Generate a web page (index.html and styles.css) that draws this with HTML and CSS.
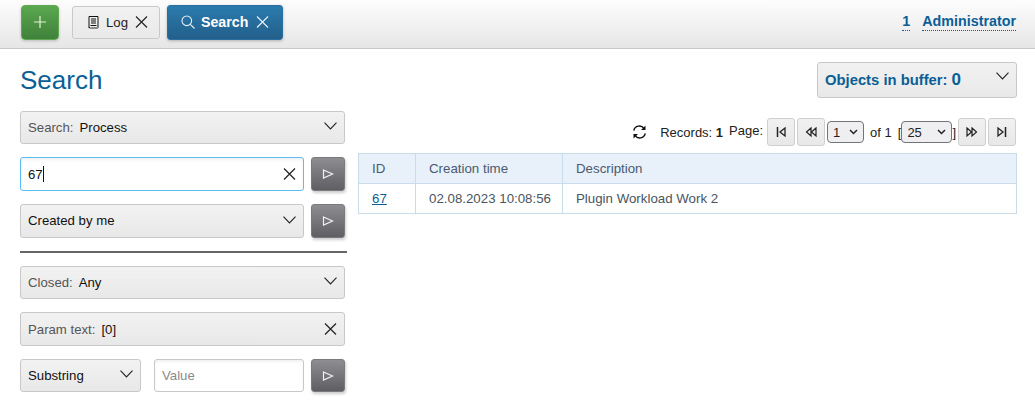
FILE: index.html
```html
<!DOCTYPE html>
<html lang="en">
<head>
<meta charset="utf-8">
<title>Search</title>
<link rel="stylesheet" href="styles.css">
</head>
<body>
<header class="topbar">
  <button class="add-btn" aria-label="Add">
    <svg width="12" height="12" viewBox="0 0 12 12"><path d="M6 0v12M0 6h12" stroke="#e6f0d2" stroke-width="1.2" fill="none"/></svg>
  </button>
  <div class="tab tab-log">
    <svg width="11" height="13" viewBox="0 0 11 13"><path d="M1 .5h9v11l-1 1-1-1-1 1-1-1-1 1-1-1-1 1-1-1-1 .5z" fill="none" stroke="#111" stroke-width="1"/><path d="M3 3h5M3 5h5M3 7h5M2.500 9.500h6" stroke="#111" stroke-width="1" fill="none"/></svg>
    <span class="tab-label">Log</span>
    <svg class="x" width="13" height="12" viewBox="0 0 13 12"><path d="M1 .5l11 11M12 .5l-11 11" stroke="#222" stroke-width="1.100" fill="none"/></svg>
  </div>
  <div class="tab tab-search">
    <svg width="14" height="14" viewBox="0 0 14 14"><circle cx="5.800" cy="5.800" r="4.800" fill="none" stroke="#e8f0f6" stroke-width="1.100"/><path d="M9.300 9.300l4.200 4.200" stroke="#e8f0f6" stroke-width="1.100" fill="none"/></svg>
    <span class="tab-label">Search</span>
    <svg class="x" width="13" height="12" viewBox="0 0 13 12"><path d="M1 .5l11 11M12 .5l-11 11" stroke="#e8f0f6" stroke-width="1.100" fill="none"/></svg>
  </div>
  <nav class="user">
    <a class="user-link">1</a>
    <a class="user-link">Administrator</a>
  </nav>
</header>

<div class="title-row">
  <h1 class="title">Search</h1>
  <div class="buffer">
    <span class="buffer-text">Objects in buffer: <span class="buffer-num">0</span></span>
    <svg class="chev" width="13" height="8" viewBox="0 0 13 8"><path d="M.5.700L6.500 7l6-6.300" stroke="#222" stroke-width="1.100" fill="none"/></svg>
  </div>
</div>

<main class="content">
  <aside class="filters">
    <div class="field field-wide">
      <span class="lbl">Search:</span><span class="val">Process</span>
      <svg class="chev end" width="13" height="8" viewBox="0 0 13 8"><path d="M.5.700L6.500 7l6-6.300" stroke="#222" stroke-width="1.100" fill="none"/></svg>
    </div>
    <div class="line line-input">
      <div class="field input focus">
        <span class="val-plain">67</span><span class="caret"></span>
        <svg class="end" width="13" height="12" viewBox="0 0 13 12"><path d="M1 .5l11 11M12 .5l-11 11" stroke="#222" stroke-width="1.200" fill="none"/></svg>
      </div>
      <button class="go" aria-label="Go"><svg width="12" height="12" viewBox="0 0 12 12"><path d="M1.500 2l9 4-9 4z" fill="none" stroke="#f2f2f2" stroke-width="1.200"/></svg></button>
    </div>
    <div class="line line-created">
      <div class="field">
        <span class="val-plain">Created by me</span>
        <svg class="chev end" width="13" height="8" viewBox="0 0 13 8"><path d="M.5.700L6.500 7l6-6.300" stroke="#222" stroke-width="1.100" fill="none"/></svg>
      </div>
      <button class="go" aria-label="Go"><svg width="12" height="12" viewBox="0 0 12 12"><path d="M1.500 2l9 4-9 4z" fill="none" stroke="#f2f2f2" stroke-width="1.200"/></svg></button>
    </div>
    <hr class="divider">
    <div class="field field-wide">
      <span class="lbl">Closed:</span><span class="val">Any</span>
      <svg class="chev end" width="13" height="8" viewBox="0 0 13 8"><path d="M.5.700L6.500 7l6-6.300" stroke="#222" stroke-width="1.100" fill="none"/></svg>
    </div>
    <div class="field field-wide field-param">
      <span class="lbl">Param text:</span><span class="val">[0]</span>
      <svg class="end" width="13" height="12" viewBox="0 0 13 12"><path d="M1 .5l11 11M12 .5l-11 11" stroke="#222" stroke-width="1.200" fill="none"/></svg>
    </div>
    <div class="line line-value">
      <div class="field field-sub">
        <span class="val-plain">Substring</span>
        <svg class="chev end" width="13" height="8" viewBox="0 0 13 8"><path d="M.5.700L6.500 7l6-6.300" stroke="#222" stroke-width="1.100" fill="none"/></svg>
      </div>
      <div class="field input input-value"><span class="placeholder">Value</span></div>
      <button class="go" aria-label="Go"><svg width="12" height="12" viewBox="0 0 12 12"><path d="M1.500 2l9 4-9 4z" fill="none" stroke="#f2f2f2" stroke-width="1.200"/></svg></button>
    </div>
  </aside>

  <section class="results">
    <div class="pager">
      <svg class="refresh" width="15" height="14" viewBox="0 0 15 14"><path d="M1.800 5.600A5.600 5.600 0 0 1 12 3.600M13.200 8.400A5.600 5.600 0 0 1 3 10.400" fill="none" stroke="#111" stroke-width="1.400"/><path d="M13.500.5v4.500H9zM1.500 13.500V9H6z" fill="#111"/></svg>
      <span class="records">Records: <b>1</b></span>
      <span class="page-lbl">Page:</span>
      <button class="pg" aria-label="First"><svg width="12" height="12" viewBox="0 0 12 12"><path d="M2.500 1v10" stroke="#222" stroke-width="1.500"/><path d="M10 2L5 6l5 4z" fill="none" stroke="#222" stroke-width="1.300"/></svg></button>
      <button class="pg" aria-label="Previous"><svg width="12" height="12" viewBox="0 0 12 12"><path d="M6 2L1.500 6 6 10zM11 2L6.500 6l4.500 4z" fill="none" stroke="#222" stroke-width="1.200"/></svg></button>
      <span class="sel sel-page">1<svg width="9" height="6" viewBox="0 0 9 6"><path d="M1 1l3.500 3.500L8 1" fill="none" stroke="#222" stroke-width="1.500"/></svg></span>
      <span class="of">of 1</span>
      <span class="bracket">[</span>
      <span class="sel sel-size">25<svg width="9" height="6" viewBox="0 0 9 6"><path d="M1 1l3.500 3.500L8 1" fill="none" stroke="#222" stroke-width="1.500"/></svg></span>
      <span class="bracket bracket-end">]</span>
      <button class="pg" aria-label="Next"><svg width="12" height="12" viewBox="0 0 12 12"><path d="M6 2l4.500 4L6 10zM1 2l4.500 4L1 10z" fill="none" stroke="#222" stroke-width="1.200"/></svg></button>
      <button class="pg" aria-label="Last"><svg width="12" height="12" viewBox="0 0 12 12"><path d="M9.500 1v10" stroke="#222" stroke-width="1.500"/><path d="M2 2l5 4-5 4z" fill="none" stroke="#222" stroke-width="1.300"/></svg></button>
    </div>
    <table class="grid">
      <thead>
        <tr><th class="c-id">ID</th><th class="c-time">Creation time</th><th>Description</th></tr>
      </thead>
      <tbody>
        <tr><td><a class="id-link">67</a></td><td>02.08.2023 10:08:56</td><td>Plugin Workload Work 2</td></tr>
      </tbody>
    </table>
  </section>
</main>
</body>
</html>
```

FILE: styles.css
```css
* { box-sizing: border-box; }
html, body { margin: 0; padding: 0; }
body {
  width: 1035px;
  height: 414px;
  overflow: hidden;
  background: #fff;
  font-family: "Liberation Sans", Arial, sans-serif;
  font-size: 13.200px;
  color: #222;
}
button { font: inherit; padding: 0; cursor: pointer; }

.topbar {
  height: 49px;
  display: flex;
  align-items: center;
  padding: 0 19px 4px 21px;
  background: linear-gradient(#fdfdfd, #e6e6e6);
  border-bottom: 1px solid #c8c8c8;
}
.add-btn {
  width: 38px;
  height: 35px;
  display: flex;
  align-items: center;
  justify-content: center;
  border: 1px solid #5ea84f;
  border-radius: 4px;
  background: linear-gradient(#5aa84f, #40813c);
  box-shadow: 0 1px 3px rgba(0,0,0,.2);
  margin-right: 13px;
}
.tab {
  display: flex;
  align-items: center;
  border-radius: 3px;
}
.tab-log {
  width: 88px;
  height: 33px;
  padding-left: 15px;
  border: 1px solid #c9c9c9;
  background: linear-gradient(#f1f1f1, #e9e9e9);
  margin-right: 7px;
}
.tab-log .tab-label { margin-left: 7px; color: #222; }
.tab-log .x { margin-left: 7px; }
.tab-search {
  width: 116px;
  height: 35px;
  padding-left: 13px;
  border: 1px solid #2a6f9f;
  background: linear-gradient(#2a7bae, #235f8a);
  box-shadow: 0 1px 3px rgba(0,0,0,.25);
  color: #fff;
  font-size: 14.200px;
  font-weight: bold;
}
.tab-search .tab-label { margin-left: 6px; }
.tab-search .x { margin-left: 8px; }
.user {
  margin-left: auto;
  display: flex;
  gap: 12px;
  font-size: 14.300px;
  font-weight: bold;
  color: #0a5f96;
}
.user-link {
  border-bottom: 1px dotted #0a5f96;
  line-height: 15px;
  padding-bottom: 1px;
}

.title-row {
  display: flex;
  justify-content: space-between;
  align-items: flex-start;
  padding: 13px 18px 0 20px;
  height: 62px;
}
.title {
  margin: 0;
  font-size: 26px;
  font-weight: normal;
  line-height: 36px;
  color: #0a5f96;
}
.buffer {
  width: 200px;
  height: 36px;
  display: flex;
  align-items: center;
  padding: 0 7px;
  border: 1px solid #c8c8c8;
  border-radius: 3px;
  background: linear-gradient(#f1f1f1, #e9e9e9);
}
.buffer-text { font-size: 14.800px; font-weight: bold; color: #0a5f96; }
.buffer-num { font-size: 17px; }
.buffer .chev { margin-left: auto; margin-top: -8px; }

.content { display: flex; padding-left: 20px; }
.filters { width: 327px; flex: none; margin-right: 11px; }
.results { width: 659px; flex: none; }

.field {
  display: flex;
  align-items: center;
  height: 34px;
  padding: 0 7px;
  border: 1px solid #c8c8c8;
  border-radius: 3px;
  background: linear-gradient(#f2f2f2, #e8e8e8);
  flex: 1 1 auto;
  min-width: 0;
}
.field-wide { width: 325px; height: 33px; }
.lbl { color: #555; margin-right: 6px; }
.val { color: #111; }
.val-plain { color: #111; }
.line-created .val-plain { margin-top: -2px; }
.end { margin-left: auto; flex: none; }
.chev { margin-top: -3px; }

.line { display: flex; width: 325px; height: 34px; margin-top: 13px; gap: 7px; }
.input { background: #fff; box-shadow: inset 0 2px 3px rgba(0,0,0,.06); }
.focus { border-color: #5cbcf5; }
.caret { width: 1px; height: 16px; background: #111; }
.go {
  width: 34px;
  height: 34px;
  flex: none;
  display: flex;
  align-items: center;
  justify-content: center;
  border: 1px solid #7a7a7e;
  border-radius: 3px;
  background: linear-gradient(#8d8d92, #5f5f63);
  box-shadow: 1px 2px 3px rgba(0,0,0,.2);
}
.divider {
  width: 327px;
  height: 2px;
  margin: 13px 0 13px;
  border: 0;
  background: #666;
}
.field-param { height: 34px; margin-top: 13px; }
.line-value { height: 33px; margin-top: 13px; gap: 0; }
.line-value .field, .line-value .go { height: 33px; }
.field-sub { width: 121px; flex: none; margin-right: 13px; }
.input-value { width: 150px; flex: none; margin-right: 7px; }
.placeholder { color: #8a8a8a; }

.pager {
  display: flex;
  align-items: center;
  justify-content: flex-end;
  height: 28px;
  margin-top: 7px;
  margin-bottom: 7px;
  font-size: 13px;
}
.refresh { margin-right: 13px; }
.records { margin-right: 6px; }
.page-lbl { margin-right: 4px; margin-top: -3px; }
.pg {
  width: 28px;
  height: 28px;
  display: flex;
  align-items: center;
  justify-content: center;
  border: 1px solid #cfcfcf;
  border-radius: 3px;
  background: linear-gradient(#f1f1f1, #e8e8e8);
  margin-right: 2px;
}
.pager .pg:last-child { margin-right: 1px; }
.sel {
  display: flex;
  align-items: center;
  justify-content: space-between;
  height: 22px;
  padding: 0 5px;
  border: 1px solid #73737a;
  border-radius: 4px;
  background: #efeff2;
}
.sel-page { width: 37px; }
.sel-size { width: 51px; }
.of { margin: 0 6px; }
.bracket-end { margin-right: 2px; }

.grid {
  width: 659px;
  border-collapse: collapse;
  table-layout: fixed;
  font-size: 13.300px;
  color: #4a5560;
}
.grid th, .grid td {
  height: 30px;
  padding: 0 13px;
  border: 1px solid #c9dcea;
  text-align: left;
  font-weight: normal;
  white-space: nowrap;
}
.grid th { background: #e8f1f9; color: #4a5a70; }
.c-id { width: 57px; }
.c-time { width: 147px; }
.id-link { color: #0a5f96; text-decoration: underline; }
```
